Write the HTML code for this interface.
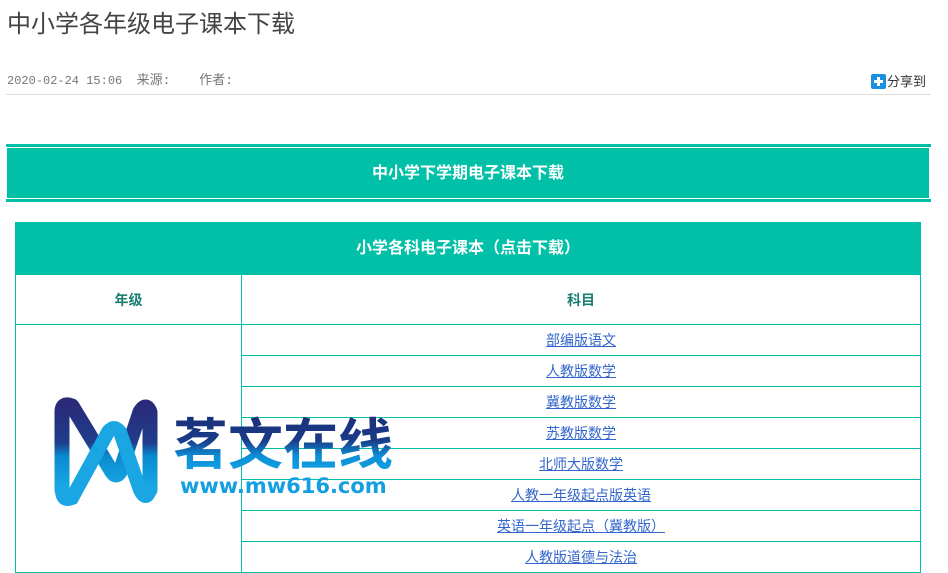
<!DOCTYPE html>
<html><head><meta charset="utf-8"><style>
body{margin:0;background:#fff;font-family:"Liberation Sans","Noto Sans CJK SC",sans-serif;width:948px;height:554px;overflow:hidden;position:relative}
.abs{position:absolute}
h1{position:absolute;left:7px;top:4px;margin:0;font-size:24px;font-weight:normal;color:#444}
.meta{left:7px;top:69px;font-size:12px;color:#777;font-family:"Liberation Mono","Noto Sans CJK SC",monospace;white-space:pre}
.hr{left:6px;top:94px;width:925px;height:1px;background:#ddd}
.share{left:871px;top:71px;font-size:13px;color:#333}
.share i{display:inline-block;width:15px;height:15px;background:#1b8fe0;border-radius:2px;vertical-align:-3px;position:relative;margin-right:1px}
.share i:before{content:"";position:absolute;left:3px;top:6px;width:9px;height:3px;background:#fff}
.share i:after{content:"";position:absolute;left:6px;top:3px;width:3px;height:9px;background:#fff}
.t{background:#00c0a8}
table{position:absolute;left:15px;top:222px;width:906px;border-collapse:collapse;table-layout:fixed}
td{border:1px solid #00c0a8;text-align:center;font-size:14px;padding:0;line-height:16px}
.r td{height:30px}
a{color:#3366cc;text-decoration:underline}
</style></head><body>
<h1>中小学各年级电子课本下载</h1>
<div class="abs meta">2020-02-24 15:06  <span style="font-size:13px">来源:</span>    <span style="font-size:13px">作者:</span></div>
<div class="abs share"><i></i>分享到</div>
<div class="abs hr"></div>
<div class="abs t" style="left:6px;top:144px;width:925px;height:3px"></div>
<div class="abs t" style="left:7px;top:148px;width:922px;height:50px;color:#fff;font-size:16px;font-weight:bold;text-align:center;line-height:52px">中小学下学期电子课本下载</div>
<div class="abs t" style="left:6px;top:199px;width:925px;height:3px"></div>
<table>
<colgroup><col style="width:226px"><col></colgroup>
<tr><td colspan="2" style="background:#00c0a8;color:#fff;font-weight:bold;font-size:16px;height:51px">小学各科电子课本（点击下载）</td></tr>
<tr><td style="height:49px;color:#1a7f70;font-weight:bold">年级</td><td style="color:#1a7f70;font-weight:bold">科目</td></tr>
<tr class="r"><td rowspan="8"></td><td><a>部编版语文</a></td></tr>
<tr class="r"><td><a>人教版数学</a></td></tr>
<tr class="r"><td><a>冀教版数学</a></td></tr>
<tr class="r"><td><a>苏教版数学</a></td></tr>
<tr class="r"><td><a>北师大版数学</a></td></tr>
<tr class="r"><td><a>人教一年级起点版英语</a></td></tr>
<tr class="r"><td><a>英语一年级起点（冀教版）</a></td></tr>
<tr class="r"><td><a>人教版道德与法治</a></td></tr>
</table>
<svg class="abs" style="left:0;top:380px" width="420" height="140">
<defs>
<linearGradient id="g" x1="0" y1="0" x2="0" y2="1"><stop offset="0" stop-color="#2a2a78"/><stop offset=".45" stop-color="#1e3e8c"/><stop offset=".6" stop-color="#0a8ad0"/><stop offset="1" stop-color="#1aaae6"/></linearGradient>
<linearGradient id="g2" x1="0" y1="0" x2="0" y2="1"><stop offset="0" stop-color="#1a2a70"/><stop offset=".5" stop-color="#1a3a88"/><stop offset=".7" stop-color="#0b8fd6"/><stop offset="1" stop-color="#18a8e6"/></linearGradient>
</defs>
<path d="M62 110 L62 32 Q62 22 72 26 L112 92 Q116 98 120 92 L140 32 Q146 22 150 32 L150 110" fill="none" stroke="url(#g)" stroke-width="15" stroke-linejoin="round" stroke-linecap="round"/>
<path d="M62 110 Q62 122 72 118 L108 52 Q114 44 120 52 L140 110 Q146 122 150 110" fill="none" stroke="#1aa6e2" stroke-width="14" stroke-linecap="round"/>
<text x="173" y="84" font-family="'Noto Sans CJK SC',sans-serif" font-weight="bold" font-size="55" fill="url(#g2)">茗文在线</text>
<text x="180" y="113" font-family="'DejaVu Sans',sans-serif" font-weight="bold" font-size="21" fill="#14a0e0">www.mw616.com</text>
</svg>
</body></html>
